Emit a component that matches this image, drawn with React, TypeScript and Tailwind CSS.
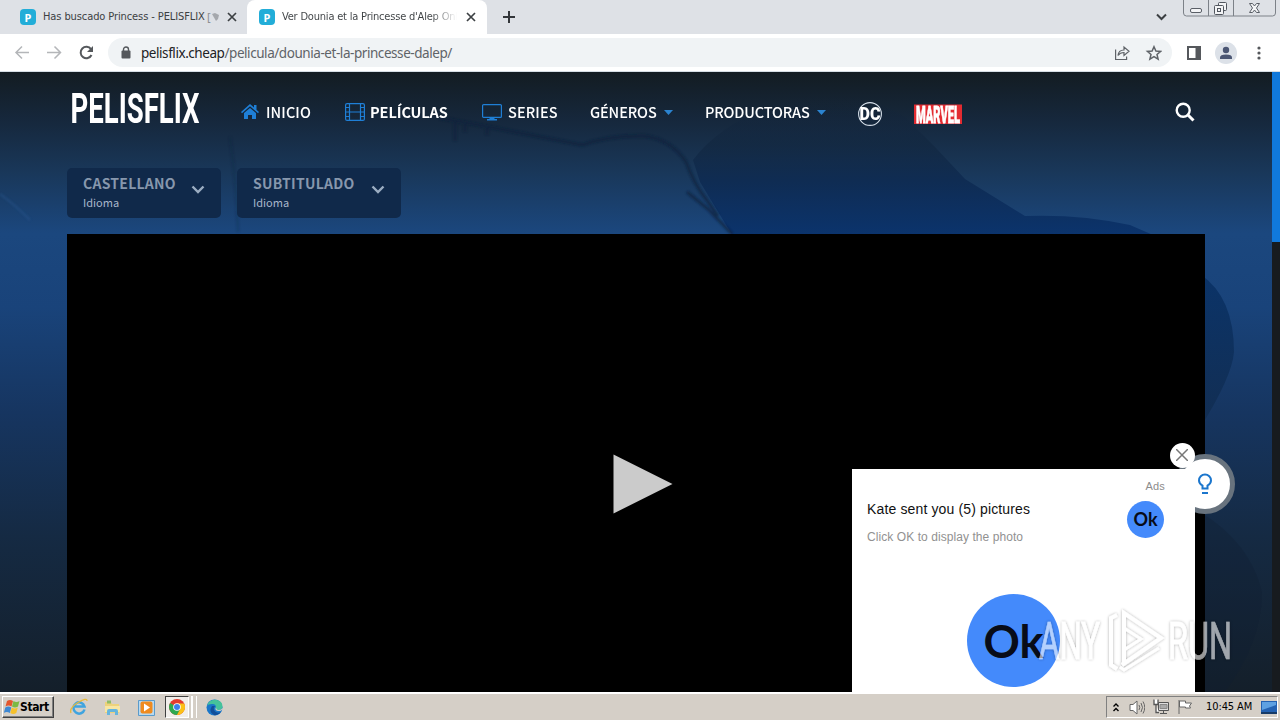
import React from "react";

const uiFont = "font-['DejaVu_Sans_Condensed','DejaVu_Sans',sans-serif]";
const siteFont = "font-['Noto_Sans_CJK_SC','Noto_Sans',sans-serif]";

function Favicon() {
  return (
    <span className="flex size-4 shrink-0 items-center justify-center rounded bg-[#22add8] font-['Noto_Sans',sans-serif] text-[11px] leading-none font-bold text-white">P</span>
  );
}

function TabClose() {
  return (
    <svg width="10" height="10" viewBox="0 0 10 10" stroke="#3c4043" strokeWidth="1.7" className="shrink-0">
      <path d="M1 1l8 8M9 1L1 9" />
    </svg>
  );
}

function TabStrip() {
  return (
    <div className="flex h-[34px] bg-[#dee1e6]">
      <div className="flex w-[247px] items-center pr-[10px] pl-5">
        <Favicon />
        <span className={`ml-[7px] w-[164px] shrink-0 text-[11px] tracking-[-0.1px] whitespace-nowrap text-[#3c4043] ${uiFont}`}>Has buscado Princess - PELISFLIX</span>
        <span className="text-[11px] text-[#8b8f94]">[</span>
        <svg width="7" height="8" viewBox="0 0 7 8" className="ml-px"><path d="M0 1l3-1 4 2-1 4-2 2z" fill="#a5a8ad" /></svg>
        <span className="ml-auto flex"><TabClose /></span>
      </div>
      <div className="flex w-[240px] items-center rounded-t-lg bg-white pr-[11px] pl-3">
        <Favicon />
        <span className={`ml-[7px] w-[175px] shrink-0 overflow-hidden bg-linear-to-r from-[#3c4043] from-85% to-transparent bg-clip-text text-[11px] tracking-[-0.2px] whitespace-nowrap text-transparent ${uiFont}`}>Ver Dounia et la Princesse d'Alep Onl</span>
        <span className="ml-auto flex"><TabClose /></span>
      </div>
      <svg className="mt-[10px] ml-[15px]" width="14" height="14" viewBox="0 0 14 14" stroke="#33363a" strokeWidth="2"><path d="M7 1v12M1 7h12" /></svg>
      <svg className="mt-[13px] ml-auto" width="11" height="8" viewBox="0 0 11 8" fill="none" stroke="#3c4043" strokeWidth="2"><path d="M1 1.5l4.5 4.5L10 1.5" /></svg>
      <svg className="mr-1 ml-4" width="93" height="18" viewBox="0 0 93 18" fill="none" stroke="#7c8188">
        <path d="M.5 0v13q0 3 3 3h86q3 0 3-3V0M25.500 0v16M50.500 0v16" />
        <rect x="7.500" y="8.500" width="11" height="4" rx="1.500" fill="#f3f4f6" stroke="#5a5f67" />
        <g stroke="#51565e" fill="#f3f4f6"><rect x="35.500" y="2.500" width="8" height="8" rx="1" /><rect x="31.500" y="5.500" width="9" height="9" rx="1" /><rect x="34.500" y="8.500" width="3" height="3" /></g>
        <path d="M66.500 3.500h3l2 2.500 2-2.500h3l-3 4.500 3 4.500h-3l-2-2.500-2 2.500h-3l3-4.500z" fill="#f3f4f6" stroke="#5a5f67" />
      </svg>
    </div>
  );
}

function Toolbar() {
  return (
    <div className="flex h-[38px] items-center border-b border-[#d5dde4] bg-white pl-[14px]">
      <svg width="82" height="18" viewBox="0 0 82 18" fill="none" stroke="#b4b6b9" strokeWidth="1.500">
        <path d="M15 8.500H2M8 2.500L2 8.500l6 6M33 8.500h13M40.500 2.500l6 6-6 6" />
        <path d="M77 5.200A5.700 5.700 0 1 0 77.500 11" stroke="#55585c" strokeWidth="2" />
        <path d="M79 2v6h-6z" fill="#55585c" stroke="none" />
      </svg>
      <div className="ml-3 flex h-[29px] w-[1064px] items-center rounded-full bg-[#f0f3f5] pl-[13px]">
        <svg width="10" height="13" viewBox="0 0 10 13"><rect y="4.500" x=".5" width="9" height="8" rx="1" fill="#55585c" /><path d="M2.500 5V3.500a2.500 2.500 0 0 1 5 0V5" fill="none" stroke="#55585c" strokeWidth="1.400" /></svg>
        <span className="mt-px ml-[10px] font-['Noto_Sans','Open_Sans',sans-serif] text-[13.500px] tracking-[-0.440px] whitespace-nowrap text-[#5f6368]"><span className="text-[#202124]">pelisflix.cheap</span>/pelicula/dounia-et-la-princesse-dalep/</span>
        <svg className="mr-[10px] ml-auto" width="48" height="16" viewBox="0 0 48 16" fill="none" stroke="#5f6368" strokeWidth="1.200">
          <path d="M1.600 4.500v10h11v-3M4 10.500q.5-5.500 6-5.500V2l5 4.300-5 4.200V7.500q-4 0-6 3z" />
          <path d="M40 1.700l1.900 4.300 4.700.4-3.600 3.100 1.100 4.600-4.100-2.500-4.100 2.500 1.100-4.600-3.600-3.100 4.700-.4z" strokeWidth="1.500" />
        </svg>
      </div>
      <svg className="ml-[15px]" width="14" height="14" viewBox="0 0 14 14"><path d="M1 1h12v12H1z" fill="none" stroke="#55585c" strokeWidth="2" /><path d="M8.500 1H13v12H8.500z" fill="#55585c" /></svg>
      <svg className="ml-[14px]" width="22" height="22" viewBox="0 0 22 22"><circle cx="11" cy="11" r="11" fill="#dce1e8" /><circle cx="11" cy="8" r="3.200" fill="#4b5673" /><path d="M5 17v-1.500q0-3 6-3t6 3V17z" fill="#4b5673" /></svg>
      <svg className="ml-5" width="4" height="14" viewBox="0 0 4 14" fill="#55585c"><circle cx="2" cy="2" r="1.600" /><circle cx="2" cy="7" r="1.600" /><circle cx="2" cy="12" r="1.600" /></svg>
    </div>
  );
}

function Backdrop() {
  return (
    <svg className="absolute inset-0" width="1272" height="620" viewBox="0 0 1272 620" preserveAspectRatio="none">
      <defs>
        <linearGradient id="sky" x1="0" y1="0" x2="0" y2="1">
          <stop offset="0" stopColor="#131c22" />
          <stop offset=".08" stopColor="#16283d" />
          <stop offset=".16" stopColor="#193759" />
          <stop offset=".26" stopColor="#1b477e" />
          <stop offset=".38" stopColor="#19437a" />
          <stop offset=".55" stopColor="#163560" />
          <stop offset=".75" stopColor="#152a43" />
          <stop offset="1" stopColor="#141f2a" />
        </linearGradient>
        <linearGradient id="rock" x1="0" y1="0" x2="0" y2="1">
          <stop offset="0" stopColor="#122238" stopOpacity="0" />
          <stop offset=".35" stopColor="#11263f" stopOpacity=".6" />
          <stop offset=".6" stopColor="#0f2c53" />
          <stop offset="1" stopColor="#0b346e" />
        </linearGradient>
        <linearGradient id="ridge" x1="0" y1="0" x2="0" y2="1">
          <stop offset="0" stopColor="#083064" />
          <stop offset="1" stopColor="#122d50" />
        </linearGradient>
        <filter id="haze"><feGaussianBlur stdDeviation="1" /></filter>
      </defs>
      <rect width="1272" height="620" fill="url(#sky)" />
      <path d="M693 88Q720 52 780 30Q850 10 905 45L935 75L965 107L1025 144Q1080 142 1130 153L1160 166H734L700 110z" fill="url(#rock)" />
      <path d="M1200 202Q1234 225 1234 280Q1232 305 1200 356z" fill="url(#ridge)" opacity=".85" />
      <path d="M1200 440Q1250 470 1262 520Q1262 570 1225 620H1200z" fill="#0f1f33" opacity=".3" />
      <g fill="none" stroke="#10223d" strokeWidth="3" opacity=".7" filter="url(#haze)">
        <path d="M440 46Q480 53 520 61L582 73Q610 63 645 64Q672 68 686 90Q694 112 706 127L718 144M687 120L708 137L732 162" />
        <path d="M455 49v20M465 50v10M487 53v10" />
        <path d="M230 65Q236 110 238 160" opacity=".25" />
      </g>
      <path d="M0 122Q14 132 30 148" fill="none" stroke="#2a568e" strokeWidth="2" opacity=".5" filter="url(#haze)" />
    </svg>
  );
}

function NavItem({ children, className = "" }: { children: React.ReactNode; className?: string }) {
  return <a className={`flex items-center whitespace-nowrap text-white ${className}`}>{children}</a>;
}

function Caret() {
  return <svg className="ml-[7px]" width="9" height="5" viewBox="0 0 9 5"><path d="M0 0h9L4.500 5z" fill="#2b83cf" /></svg>;
}

function SiteHeader() {
  return (
    <header className={`relative flex h-[82px] items-center pb-[2px] pl-[70px] text-[14.500px] font-medium ${siteFont}`}>
      <svg width="132" height="54" viewBox="0 0 132 54" className="-mt-[6px] shrink-0 overflow-visible">
        <text x="0" y="0" transform="translate(.5 40.500) scale(1 1.400)" fontFamily="Roboto, sans-serif" fontWeight="700" fontSize="30" fill="#fff" textLength="129" lengthAdjust="spacingAndGlyphs">PELISFLIX</text>
      </svg>
      <NavItem className="ml-[39px] w-[104px]">
        <svg width="18" height="16" viewBox="0 0 18 16" fill="#1f7fd6"><path d="M0 8L9 0l4 3.500V1h2.500v4.700L18 8l-1 1.200L9 2.300 1 9.200z" /><path d="M3 9l6-5 6 5v6h-4v-4H7v4H3z" /></svg>
        <span className="ml-[7px] tracking-[0.1px]">INICIO</span>
      </NavItem>
      <NavItem className="w-[137px] font-bold">
        <svg width="20" height="18" viewBox="0 0 20 18" fill="none" stroke="#1f7fd6" strokeWidth="1.200"><rect x=".6" y=".6" width="18.800" height="16.800" rx="1.500" /><path d="M4.500 1v16M15.500 1v16M4.500 9h11M1 4.500h3.500M1 9h3.500M1 13.500h3.500M15.500 4.500H19M15.500 9H19M15.500 13.500H19" /></svg>
        <span className="ml-[5px] tracking-[-0.080px]">PELÍCULAS</span>
      </NavItem>
      <NavItem className="w-[108px]">
        <svg width="20" height="17" viewBox="0 0 20 17"><rect x=".6" y=".6" width="18.800" height="12.800" rx="1" fill="none" stroke="#1f7fd6" strokeWidth="1.200" /><path d="M8 14h4l1 1h2v1.500H5V15h2z" fill="#1f7fd6" /></svg>
        <span className="ml-[6px] tracking-[0.1px]">SERIES</span>
      </NavItem>
      <NavItem className="w-[115px] tracking-[-0.120px]">GÉNEROS<Caret /></NavItem>
      <NavItem className="w-[153px] tracking-[-0.160px]">PRODUCTORAS<Caret /></NavItem>
      <svg width="24" height="24" viewBox="0 0 24 24" className="mt-1"><circle cx="12" cy="12" r="11.400" fill="none" stroke="#d7e0ea" strokeWidth="1.100" /><text x="0" y="0" transform="translate(1.500 18.200) scale(1 1.150)" fontFamily="Roboto, sans-serif" fontWeight="900" fontSize="16" fill="#fff" textLength="21" lengthAdjust="spacingAndGlyphs">DC</text></svg>
      <svg width="48" height="30" viewBox="0 0 48 30" className="mt-1 ml-8 overflow-visible"><path d="M0 5.500h48V25H0z" fill="#e32b31" /><text x="0" y="0" transform="translate(2 24) scale(1 1.600)" fontFamily="Roboto, sans-serif" fontWeight="900" fontSize="15" fill="#fff" stroke="#fff" strokeWidth=".5" textLength="44" lengthAdjust="spacingAndGlyphs">MARVEL</text></svg>
      <svg className="mr-[77px] ml-auto" width="20" height="20" viewBox="0 0 20 20" fill="none" stroke="#fff" strokeWidth="2.400"><circle cx="8.200" cy="8.200" r="6.500" /><path d="M13 13l5.500 5.500" strokeWidth="3" /></svg>
    </header>
  );
}

function LanguageButton({ label, className }: { label: string; className: string }) {
  return (
    <button className={`flex h-[50px] items-start justify-between rounded-[5px] bg-[#10294a] pt-[7px] pr-4 pl-4 text-left ${siteFont} ${className}`}>
      <span className="flex flex-col">
        <span className="text-[14px] leading-4 font-bold tracking-[0.250px] text-[#8797ad]">{label}</span>
        <span className="mt-[3px] text-[11px] leading-4 text-[#a9b7ca]">Idioma</span>
      </span>
      <svg className="mt-[10px]" width="14" height="9" viewBox="0 0 14 9" fill="none" stroke="#9badc2" strokeWidth="2.400"><path d="M1.500 1.500L7 7l5.500-5.500" /></svg>
    </button>
  );
}

function OkBadge({ className }: { className: string }) {
  return <span className={`flex items-center justify-center rounded-full bg-[#448afb] font-['Lato',sans-serif] font-bold text-[#080c18] ${className}`}>Ok</span>;
}

function AdCard() {
  return (
    <aside className="absolute top-[397px] left-[852px] h-[223px] w-[343px] bg-white font-['Liberation_Sans',sans-serif]">
      <div className="flex justify-between pt-[9px] pr-[30px] pl-[15px]">
        <div className="flex flex-col">
          <span className="mt-[22px] text-[14px] leading-[18px] tracking-[0.140px] whitespace-nowrap text-[#111]">Kate sent you (5) pictures</span>
          <span className="mt-[11px] text-[12px] leading-4 tracking-[0.070px] whitespace-nowrap text-[#919191]">Click OK to display the photo</span>
        </div>
        <div className="flex flex-col items-end">
          <span className="text-[11px] leading-4 tracking-[0.2px] text-[#8c8c8c]">Ads</span>
          <OkBadge className="mt-[7px] mr-px size-[37px] text-[18px]" />
        </div>
      </div>
      <OkBadge className="mt-[49px] ml-[115px] size-[93px] pt-[2px] text-[45px]" />
    </aside>
  );
}

function Watermark() {
  return (
    <svg className="absolute top-[534px] left-[1036px] overflow-visible" width="200" height="72" viewBox="0 0 200 72" fontFamily="Roboto, sans-serif" fontSize="38" fontWeight="400">
      <defs><filter id="soft" x="-10%" y="-20%" width="120%" height="140%"><feDropShadow dx="0" dy="0" stdDeviation="1.500" floodColor="#000" floodOpacity=".55" /></filter></defs>
      <g filter="url(#soft)" opacity=".6" fill="#fff">
        <g stroke="#fff" strokeWidth=".5">
          <text transform="translate(3 53) scale(1 1.350)" x="0" y="0" textLength="61" lengthAdjust="spacingAndGlyphs">ANY</text>
          <text transform="translate(132 53) scale(1 1.350)" x="0" y="0" textLength="64" lengthAdjust="spacingAndGlyphs">RUN</text>
        </g>
        <g fill="none" stroke="#fff" strokeWidth="4"><path d="M81 9l-6 3v47l6 4M88 57V7l37 25-39 27" /><path d="M88 44V22l17 11zM84 61l4 3 35-22" strokeWidth="3" /></g>
      </g>
    </svg>
  );
}

function Site() {
  return (
    <main className="relative flex h-[620px] overflow-hidden bg-[#141c24]">
      <Backdrop />
      <div className="relative flex w-[1272px] flex-col">
        <SiteHeader />
        <div className="mt-[14px] flex gap-4 pl-[67px]">
          <LanguageButton label="CASTELLANO" className="w-[154px]" />
          <LanguageButton label="SUBTITULADO" className="w-[164px]" />
        </div>
        <div className="mt-4 ml-[67px] flex w-[1138px] grow bg-black">
          <svg className="mt-[220px] ml-[546px]" width="60" height="60" viewBox="0 0 60 60"><path d="M.5.500L59.500 30 .5 59.500z" fill="#cbcbcb" /></svg>
        </div>
      </div>
      <div className="relative w-2 bg-[#171b1f]"><div className="h-[170px] bg-[#1079dc]" /></div>
      <span className="absolute top-[382px] left-[1175px] flex size-[60px] items-center justify-center rounded-full border-[5px] border-[#68737e] bg-white">
        <svg width="16" height="22" viewBox="0 0 16 22" fill="none" stroke="#1b76cd" strokeWidth="2"><path d="M5.500 15.500v-3Q2 10.500 2 7.500a6 6 0 0 1 12 0q0 3-3.500 5v3zM5 20h6" /></svg>
      </span>
      <AdCard />
      <span className="absolute top-[371px] left-[1170px] flex size-[25px] items-center justify-center rounded-full bg-white">
        <svg className="-mt-px -ml-px" width="12" height="12" viewBox="0 0 12 12" stroke="#777" strokeWidth="1.500"><path d="M0 0l12 12M12 0L0 12" /></svg>
      </span>
      <Watermark />
    </main>
  );
}

function Taskbar() {
  return (
    <footer className={`flex h-7 items-center border-t-2 border-white bg-[#d5cfc7] text-[11px] text-black ${uiFont}`}>
      <div className="ml-[2px] flex h-[22px] w-[52px] items-center border border-t-white border-r-[#404040] border-b-[#404040] border-l-white pl-px shadow-[inset_-1px_-1px_#808080]">
        <svg width="17" height="16" viewBox="0 0 17 16" className="shrink-0"><path d="M3 2q3-2 6 0L7.500 7.500q-3-2-6 0z" fill="#e3562d" /><path d="M9.500 2q3 2 6 0L14 7.500q-3 2-6 0z" fill="#7bb943" /><path d="M1.300 8.500q3-2 6 0L5.800 14q-3-2-6 0z" fill="#3e88d3" /><path d="M7.800 8.500q3 2 6 0L12.300 14q-3 2-6 0z" fill="#f6c12c" /></svg>
        <span className="-ml-px text-[12px] font-bold tracking-[-0.4px]">Start</span>
      </div>
      <svg className="ml-[16px]" width="18" height="18" viewBox="0 0 18 18" fill="none"><path d="M14.500 11.500A5.600 5.600 0 1 1 14.500 8.500H5" stroke="#3fa4df" strokeWidth="2.500" /><path d="M1 15Q-1 10 8 4.500T17 3" stroke="#e7b93b" strokeWidth="1.300" /></svg>
      <svg className="ml-[16px]" width="17" height="17" viewBox="0 0 17 17"><path d="M1 3h6l1 2h7v9H1z" fill="#edd27b" /><path d="M3 1.500h4v3H3z" fill="#8fbc67" /><path d="M1 7h15v6H1z" fill="#f7e6a4" /><path d="M3 16v-4q0-2 2-2h7q2 0 2 2v4h-3v-3H6v3z" fill="#66b5dd" /></svg>
      <svg className="ml-[17px]" width="17" height="17" viewBox="0 0 17 17"><path d="M.5 1.500h16v15H.5z" fill="#b9d9ef" stroke="#5a9bcb" /><rect x="2.500" y="2.500" width="12" height="12" rx="2" fill="#ef8b1f" /><path d="M6 4.500v8l6-4z" fill="#fff" /></svg>
      <div className="ml-[10px] flex h-[22px] w-6 items-center justify-center border border-t-[#404040] border-r-white border-b-white border-l-[#404040] bg-[#f1eeea]">
        <svg width="16" height="16" viewBox="0 0 16 16"><circle cx="8" cy="8" r="8" fill="#e33b2e" /><path d="M8 8L1.100 4A8 8 0 0 0 8 16l3.500-6z" fill="#2da94f" /><path d="M8 4.500h7.200A8 8 0 0 1 8 16l3.200-6z" fill="#fbc116" /><circle cx="8" cy="8" r="3.800" fill="#fff" /><circle cx="8" cy="8" r="3" fill="#3d7fea" /></svg>
      </div>
      <div className="h-[22px] w-1 border-r-2 border-white" />
      <div className="h-[22px] w-1 border-r border-white" />
      <svg className="ml-[9px]" width="17" height="17" viewBox="0 0 17 17"><circle cx="8.500" cy="8.500" r="8" fill="#1976c9" /><path d="M1 7Q3 0 10 .700Q17 2 16.500 8 16 11 12 11q-3 0-2-2.500Q10 4.500 6 5 2 5 1 7z" fill="#45c29b" /><path d="M6 7Q2 13 8 16 12 17 15 13 10 15 8 11 7 9 9 7z" fill="#124e99" /><path d="M10 8q-2 4 3 4 2 0 3.500-1.500V9q-1 2-4 2-2.500 0-2.500-3z" fill="#d5cfc7" /></svg>
      <div className="mr-[2px] ml-auto flex h-[22px] w-[172px] items-center border border-t-[#808080] border-r-white border-b-white border-l-[#808080] pl-[6px]">
        <svg width="6" height="9" viewBox="0 0 6 9" fill="none" stroke="#000" strokeWidth="1.400"><path d="M.5 3.500L3 1l2.500 2.500M.5 8L3 5.500 5.500 8" /></svg>
        <svg className="ml-[10px]" width="16" height="15" viewBox="0 0 16 15" fill="none" stroke="#666"><path d="M1 4.500h3L8 1v13l-4-3.500H1z" fill="#fff" /><path d="M10 5q1.500 2.500 0 5M12 3q3 4.500 0 9M14 1.500q3.500 6 0 12" /></svg>
        <svg className="ml-[8px]" width="16" height="16" viewBox="0 0 16 16" stroke="#555"><path d="M5.500 3.500h10v8h-10z" fill="#ddd" /><path d="M7 5.500h7v4H7z" fill="#aaa" stroke="#888" /><path d="M10.500 12v2.500M7 14.500h7" /><path d="M1 .5v5h4v-5M3 5.500v8h3" fill="#fff" strokeWidth="1.300" /></svg>
        <svg className="ml-[8px]" width="16" height="16" viewBox="0 0 16 16" fill="#fff" stroke="#666"><path d="M2 1v14M2.500 2h6v2h6l-2 3 1 2h-5V8h-6z" /></svg>
        <span className="ml-[13px] tracking-[-0.1px] whitespace-nowrap">10:45 AM</span>
        <svg className="ml-auto" width="16" height="13" viewBox="0 0 16 13"><rect width="16" height="11" fill="#2462b2" /><path d="M1 1h14v3L1 9z" fill="#5ea1e2" /><path d="M0 11h16v2H0z" fill="#173b68" /></svg>
      </div>
    </footer>
  );
}

export default function App() {
  return (
    <div className="flex h-[720px] w-[1280px] flex-col overflow-hidden">
      <TabStrip />
      <Toolbar />
      <Site />
      <Taskbar />
    </div>
  );
}
